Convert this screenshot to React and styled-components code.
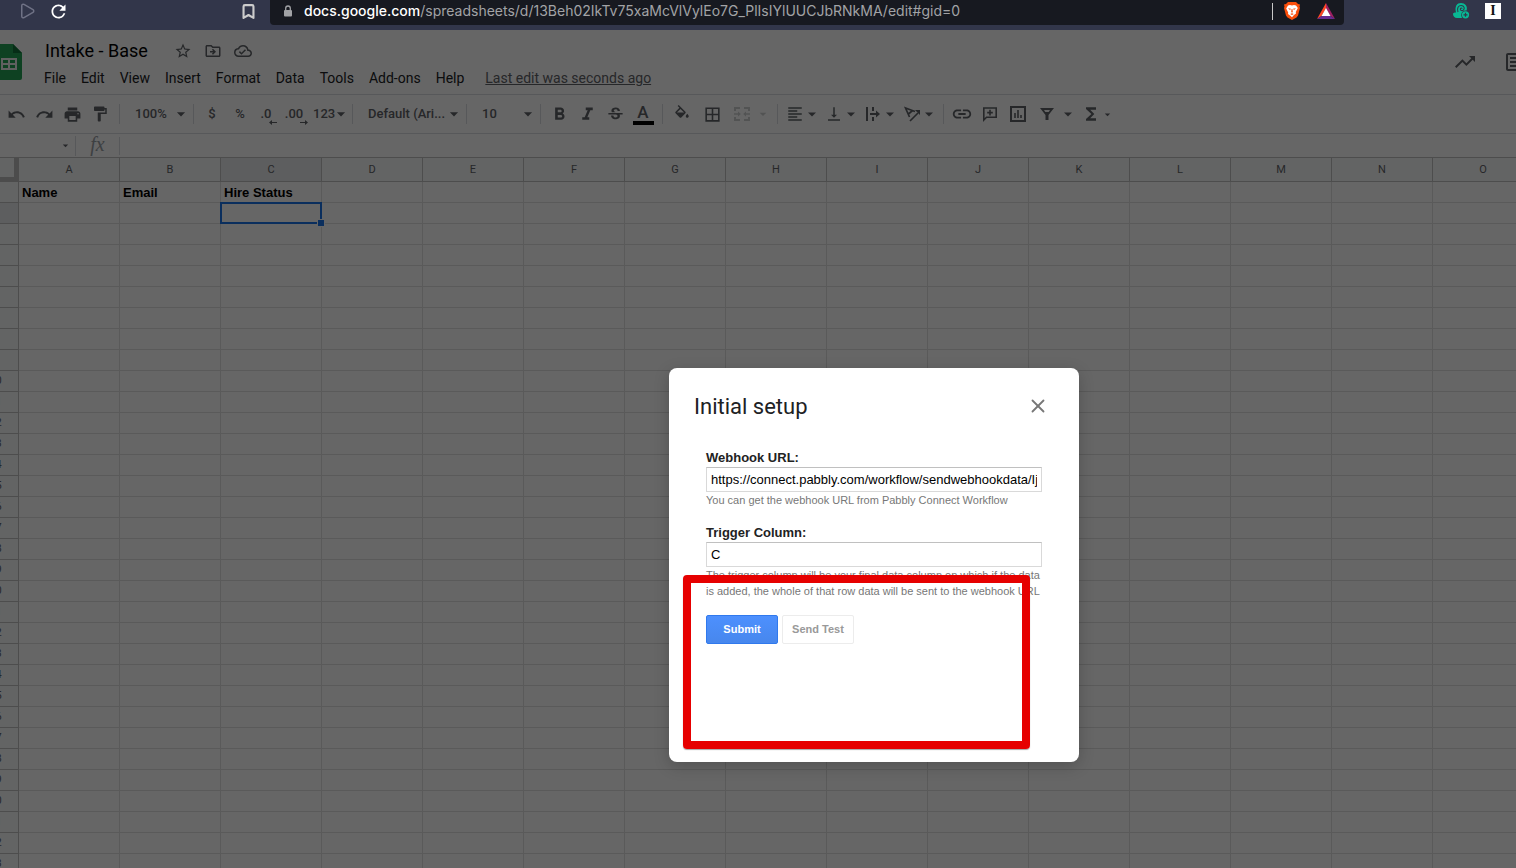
import React from 'react'
import styled, { createGlobalStyle, css } from 'styled-components'
import { Bookmark, Play, X } from 'lucide-react'
import {
  MdArrowDropDown,
  MdBorderAll,
  MdFormatAlignLeft,
  MdFormatBold,
  MdFormatItalic,
  MdFormatPaint,
  MdFunctions,
  MdLink,
  MdOutlineArticle,
  MdOutlineCloudDone,
  MdOutlineDriveFileMove,
  MdPrint,
  MdRedo,
  MdRefresh,
  MdStarBorder,
  MdStrikethroughS,
  MdTrendingUp,
  MdUndo,
  MdVerticalAlignBottom
} from 'react-icons/md'

const colors = {
  chrome: '#32364a',
  address: '#171920',
  icon: '#5f6368',
  line: '#dadce0',
  headLine: '#c0c0c0',
  cellLine: '#e0e0e0',
  head: '#f8f9fa',
  blue: '#1a73e8'
}

const ui = '"Roboto", "Liberation Sans", sans-serif'
const arial = '"Liberation Sans", Arial, sans-serif'

const GlobalStyle = createGlobalStyle`
  * {
    box-sizing: border-box;
  }
  body {
    margin: 0;
    overflow: hidden;
    font-family: ${ui};
  }
  button, input, select {
    font: inherit;
    color: inherit;
    margin: 0;
    padding: 0;
    border: 0;
    background: none;
  }
  svg {
    display: block;
    flex: none;
  }
`

const Page = styled.div`
  display: flex;
  flex-direction: column;
  height: 100vh;
`

/* browser bar */

const BrowserBar = styled.header`
  display: flex;
  flex: none;
  height: 30px;
  background: ${colors.chrome};
  color: #fff;
`

const BrowserNav = styled.nav`
  display: flex;
  flex: none;
  align-items: center;
  width: 270px;
  height: 22px;
  padding: 0 13px 0 18px;
  gap: 12px;
  button:last-child {
    margin-left: auto;
  }
`

const Address = styled.div`
  display: flex;
  flex: 1;
  align-items: center;
  min-width: 0;
  height: 25px;
  padding: 0 9px 3px 13px;
  gap: 11px;
  border-radius: 0 0 4px 4px;
  background: ${colors.address};
  color: #a2a3a6;
  font: 14px/20px "Inter", ${arial};
`

const Url = styled.span`
  flex: 1;
  overflow: hidden;
  white-space: nowrap;
  b {
    color: #fff;
    font-weight: 500;
  }
`

const Shields = styled.div`
  display: flex;
  align-items: center;
  gap: 16px;
  height: 17px;
  padding-left: 10px;
  border-left: 1px solid #c8c8c8;
`

const Extensions = styled.div`
  display: flex;
  flex: none;
  align-items: center;
  justify-content: flex-end;
  width: 172px;
  height: 22px;
  padding-right: 15px;
  gap: 15px;
`

const Instapaper = styled.button`
  width: 16px;
  height: 16px;
  background: #fff;
  color: #111;
  font: bold 14px/16px "Liberation Serif", serif;
`

/* spreadsheet */

const Workspace = styled.div`
  position: relative;
  display: flex;
  flex: 1;
  flex-direction: column;
  min-height: 0;
  overflow: hidden;
  background: #fff;
`

const DocHeader = styled.header`
  display: flex;
  flex: none;
  height: 65px;
  padding-top: 10px;
  border-bottom: 1px solid ${colors.line};
`

const Logo = styled.a`
  flex: none;
  width: 41px;
  margin: 4px 0 0 -4px;
`

const DocInfo = styled.div`
  display: flex;
  flex-direction: column;
`

const TitleRow = styled.div`
  display: flex;
  align-items: center;
  height: 22px;
  padding-left: 8px;
  gap: 12px;
  color: ${colors.icon};
`

const DocTitle = styled.h1`
  margin: 0 14px 0 0;
  color: #000;
  font: 18px/22px ${ui};
`

const MenuRow = styled.nav`
  display: flex;
  align-items: center;
  height: 32px;
  color: #202124;
  font-size: 14px;
  line-height: 20px;
  button {
    padding: 0 7px;
    margin-right: 1px;
  }
  a {
    margin-left: 13px;
    color: ${colors.icon};
  }
`

const DocActions = styled.div`
  display: flex;
  align-items: center;
  height: 44px;
  margin: 0 -11px 0 auto;
  gap: 26px;
  color: ${colors.icon};
`

const Toolbar = styled.div`
  display: flex;
  flex: none;
  align-items: center;
  height: 39px;
  padding-left: 2px;
  border-bottom: 1px solid ${colors.line};
  color: ${colors.icon};
  font-size: 13px;
  font-weight: 500;
  line-height: 16px;
`

const Divider = styled.span`
  flex: none;
  width: 1px;
  height: 20px;
  margin: 0 4px 0 5px;
  background: ${colors.line};
`

const Tool = styled.button`
  display: flex;
  flex: none;
  align-items: center;
  justify-content: center;
  width: ${props => props.$wide ? 30 : 28}px;
  height: 28px;
`

const MenuTool = styled.button`
  display: flex;
  flex: none;
  align-items: center;
  height: 28px;
  padding: 0 1px 0 4px;
  ${props => props.$roomy && css`
    padding-left: 6px;
    gap: 4px;
  `}
  ${props => props.$muted && css`
    opacity: 0.3;
  `}
`

const NumberFormat = styled.button`
  display: flex;
  flex: none;
  align-items: center;
  width: 37px;
  height: 28px;
  padding-left: 3px;
  svg {
    margin-left: -3px;
  }
`

const Decimals = styled.span`
  display: flex;
  flex-direction: column;
  align-items: flex-end;
  height: 18px;
  padding: 1px 4px 0 0;
  font-size: 13px;
  svg {
    margin: -2px -5px 0 0;
  }
`

const TextColor = styled.span`
  width: 21px;
  border-bottom: 4px solid #000;
  font-size: 17px;
  line-height: 18px;
`

const PickerBox = styled.label`
  display: grid;
  flex: none;
  grid-template-columns: 1fr 16px;
  align-items: center;
  width: ${props => props.$width}px;
  select {
    grid-area: 1 / 1 / 2 / 3;
    width: 100%;
    padding: 0 0 0 11px;
    appearance: none;
    outline: none;
  }
  svg {
    grid-area: 1 / 2;
    pointer-events: none;
  }
`

const FormulaBar = styled.div`
  display: flex;
  flex: none;
  align-items: center;
  height: 24px;
  border-bottom: 1px solid ${colors.headLine};
  color: ${colors.icon};
  > input {
    flex: 1;
  }
`

const NameBox = styled.div`
  display: flex;
  flex: none;
  align-items: center;
  width: 76px;
  height: 20px;
  padding-right: 3px;
  border-right: 1px solid ${colors.line};
  input {
    flex: 1;
    min-width: 0;
  }
`

const Fx = styled.span`
  flex: none;
  width: 44px;
  height: 18px;
  border-right: 1px solid ${colors.line};
  color: #9aa0a6;
  font: italic 20px/14px "Liberation Serif", serif;
  text-align: center;
`

const SheetTable = styled.table`
  flex: none;
  width: 1561px;
  margin-left: -27px;
  border-spacing: 0;
  table-layout: fixed;
  th, td {
    height: 21px;
    padding: 2px 3px 0;
    border: solid ${colors.cellLine};
    border-width: 0 1px 1px 0;
  }
  th {
    padding: 0;
    border-color: ${colors.headLine};
    background: ${colors.head};
    color: ${colors.icon};
    font: 11px/14px ${ui};
    text-align: center;
  }
  thead th {
    height: 24px;
  }
  thead th:first-child {
    width: 46px;
    border-color: #bdbdbd;
    border-width: 0 5px 5px 0;
  }
  th[data-active='true'] {
    background: #e8eaed;
  }
`

const Cell = styled.td`
  position: relative;
  color: #000;
  font: bold 13px/16px ${arial};
  ${props => props.$selected && css`
    &::before {
      content: '';
      position: absolute;
      z-index: 1;
      inset: -1px;
      border: 2px solid ${colors.blue};
    }
    &::after {
      content: '';
      position: absolute;
      z-index: 1;
      right: -4px;
      bottom: -4px;
      width: 6px;
      height: 6px;
      border: 1px solid #fff;
      background: ${colors.blue};
    }
  `}
`

/* dialog */

const Overlay = styled.div`
  position: absolute;
  z-index: 2;
  inset: 0;
  display: flex;
  align-items: flex-start;
  justify-content: center;
  padding: 338px 0 0 232px;
  background: rgba(0, 0, 0, 0.6);
`

const DialogBox = styled.section`
  position: relative;
  width: 410px;
  padding: 25px 25px 118px;
  border-radius: 8px;
  background: #fff;
  box-shadow: 0 4px 16px rgba(0, 0, 0, 0.2);
`

const DialogHead = styled.header`
  display: flex;
  align-items: flex-start;
  justify-content: space-between;
  margin-bottom: 28px;
  padding-right: 5px;
  color: #777;
  h2 {
    margin: 0;
    color: #202124;
    font: 22px/28px ${ui};
  }
  button {
    padding-top: 2px;
  }
`

const Form = styled.form`
  display: flex;
  flex-direction: column;
  padding: 0 12px;
  gap: 16px;
  color: #222;
  font: 13px/18px ${arial};
`

const FieldBox = styled.div`
  display: flex;
  flex-direction: column;
  label {
    font-weight: bold;
  }
  input {
    height: 25px;
    padding: 0 4px;
    border: 1px solid #d9d9d9;
    border-top-color: #c0c0c0;
    color: #000;
  }
  small {
    color: #777;
    font-size: 11px;
    line-height: 16px;
    white-space: nowrap;
  }
`

const Buttons = styled.div`
  display: flex;
  gap: 4px;
`

const FormButton = styled.button`
  width: 72px;
  height: 29px;
  padding-bottom: 1px;
  border: 1px solid #ececec;
  border-radius: 2px;
  background: #fff;
  color: #999;
  font-size: 11px;
  font-weight: bold;
  ${props => props.$primary && css`
    border-color: #3079ed;
    background: linear-gradient(#4d90fe, #4787ed);
    color: #fff;
  `}
`

const Highlight = styled.div`
  position: absolute;
  top: 207px;
  left: 14px;
  width: 347px;
  height: 174px;
  border: 8px solid #e60000;
  border-radius: 4px;
  box-shadow: 0 1px 1px rgba(0, 0, 0, 0.35);
  pointer-events: none;
`

/* drawings */

const LockIcon = () => (
  <svg width='10' height='12' viewBox='0 0 10 12'>
    <rect x='1' y='5' width='8' height='6.500' rx='1' fill='currentColor' />
    <path d='M2.700 6V3.300a2.300 2.300 0 0 1 4.600 0V6' fill='none' stroke='currentColor' strokeWidth='1.300' />
  </svg>
)

const SheetsLogo = () => (
  <svg width='26' height='36' viewBox='0 0 26 36'>
    <path d='M2 0h15l9 9v25a2 2 0 0 1-2 2H2a2 2 0 0 1-2-2V2a2 2 0 0 1 2-2z' fill='#23a455' />
    <path d='M17 0l9 9h-9z' fill='#12703a' />
    <path d='M5 14h16v12H5zM7 16v3h5v-3zm7 0v3h5v-3zm-7 5v3h5v-3zm7 0v3h5v-3z' fill='#f1f1f1' fillRule='evenodd' />
  </svg>
)

const BraveLogo = () => (
  <svg width='18' height='18' viewBox='0 0 18 18'>
    <path d='M5 0h8l2 2 2 .5-.5 2 .5 1.500-2 7.500-1.500 2L9 18l-4.500-2.500L3 13.500 1 6l.5-1.500-.5-2L3 2z' fill='#fb4f0b' />
    <path d='M5 3.500 7 3l2 .5 2-.5 2 .5 1.800 2.500-2 4 .200 1.500-2 1.500L9 15.200 7 13.500 5 12l.2-1.500-2-4z' fill='#fff' />
    <path d='M5 6.200l3 .6-1 1.200zM13 6.200l-3 .6 1 1.200zM8.600 7h.8l.4 3-.8.800-.8-.8zM7.200 12l1.800-.7 1.800.7L9 13z' fill='#fb4f0b' />
  </svg>
)

const BatLogo = () => (
  <svg width='18' height='16' viewBox='0 0 18 16'>
    <path d='M9 0v5.500L4.500 13 0 16z' fill='#ff4724' />
    <path d='M9 0l9 16-4.500-3L9 5.500z' fill='#9e1f63' />
    <path d='M0 16l4.500-3h9l4.500 3z' fill='#662d91' />
    <path d='M9 5l4.500 8h-9z' fill='#fff' />
  </svg>
)

const SnailIcon = () => (
  <svg width='17' height='16' viewBox='0 0 17 16'>
    <path d='M0 11c0-1 1-1.500 3-1.500C1.500 3 4 0 8 0c4 0 6.500 3 5.800 6.500L13 9c-4 0-5 3-4 6H4c-2.500 0-4-2-4-4z' fill='#08b894' />
    <path d='M5 9C3.500 5 5.500 2.500 8.200 2.500c3 0 4 3.500 2 4.800C8.500 8.300 6.800 7 7.500 5.500c.4-.7 1.500-.5 1.500.3' fill='none' stroke={colors.chrome} strokeWidth='1.100' />
    <circle cx='12.500' cy='11.800' r='4.200' fill={colors.chrome} />
    <circle cx='12.500' cy='11.800' r='3.600' fill='#08b894' />
    <path d='M12.500 9.800v4M10.500 11.800h4' stroke={colors.chrome} strokeWidth='1.200' />
  </svg>
)

const FillIcon = () => (
  <svg width='18' height='18' viewBox='0 0 24 24' fill='currentColor'>
    <path d='M16.560 8.940 7.620 0 6.210 1.410l2.380 2.380-5.150 5.150a1.490 1.490 0 0 0 0 2.120l5.500 5.500c.29.29.68.44 1.060.44s.77-.15 1.060-.44l5.500-5.500c.59-.58.59-1.530 0-2.120zM5.210 10 10 5.210 14.790 10zM19 11.500s-2 2.170-2 3.500c0 1.100.9 2 2 2s2-.9 2-2c0-1.330-2-3.500-2-3.500z' />
  </svg>
)

const MergeIcon = () => (
  <svg width='18' height='18' viewBox='0 0 18 18' fill='none' stroke='currentColor' strokeWidth='2'>
    <path d='M2 6V3h5M11 3h5v3M2 12v3h5M11 15h5v-3' />
    <path d='M1 9h5M12 9h5' strokeWidth='1.500' />
    <path d='M5 6.500 7.800 9 5 11.500zM13 6.500 10.200 9l2.800 2.500z' fill='currentColor' stroke='none' />
  </svg>
)

const WrapIcon = () => (
  <svg width='18' height='18' viewBox='0 0 18 18' fill='none' stroke='currentColor' strokeWidth='2'>
    <path d='M3 2v14M9 2v4M9 12v4M6 9h7' />
    <path d='M12 5.500 16 9l-4 3.500z' fill='currentColor' stroke='none' />
  </svg>
)

const RotateIcon = () => (
  <svg width='18' height='18' viewBox='0 0 18 18' fill='none' stroke='currentColor' strokeWidth='1.700'>
    <path d='M6.500 12 2.500 3l9.500 3.500M5.500 9l4-3.500M7 16l8-8' />
    <path d='M12 5h5v5z' fill='currentColor' stroke='none' />
  </svg>
)

const CommentIcon = () => (
  <svg width='16' height='16' viewBox='0 0 16 16' fill='none' stroke='currentColor' strokeWidth='1.600'>
    <path d='M1.800 14V2h12.400v9.200H4.500z' />
    <path d='M8 3.800v5.600M5.200 6.600h5.600' />
  </svg>
)

const ChartIcon = () => (
  <svg width='16' height='16' viewBox='0 0 16 16' fill='none' stroke='currentColor' strokeWidth='2'>
    <rect x='1' y='1' width='14' height='14' />
    <path d='M5 7v5M8 4v8M11 9v3' strokeWidth='1.600' />
  </svg>
)

const FilterIcon = () => (
  <svg width='18' height='18' viewBox='0 0 18 18' fill='currentColor'>
    <path d='M2 3h14l-5.500 7v5h-3v-5zM6 5l1.300 2h3.400L12 5z' fillRule='evenodd' />
  </svg>
)

const SmallArrow = ({ right }) => (
  <svg width='8' height='5' viewBox='0 0 8 5' fill='currentColor'>
    <path d={right ? 'M0 2h5V0l3 2.500L5 5V3H0z' : 'M8 2H3V0L0 2.500 3 5V3h5z'} />
  </svg>
)

const Arrow = () => <MdArrowDropDown size={18} viewBox='1 1 22 22' />

const Picker = ({ name, value, width }) => (
  <PickerBox $width={width}>
    <select aria-label={name} defaultValue={value}>
      <option>{value}</option>
    </select>
    <Arrow />
  </PickerBox>
)

const menus = ['File', 'Edit', 'View', 'Insert', 'Format', 'Data', 'Tools', 'Add-ons', 'Help']
const columns = 'ABCDEFGHIJKLMNO'.split('')
const rows = Array.from({ length: 33 }, (_, i) => i + 1)
const cells = { A1: 'Name', B1: 'Email', C1: 'Hire Status' }
const selected = 'C2'

const Browser = () => (
  <BrowserBar>
    <BrowserNav>
      <button aria-label='Forward'><Play size={18} strokeWidth={2} color='#6f7285' /></button>
      <button aria-label='Reload'><MdRefresh size={21} /></button>
      <button aria-label='Bookmark'><Bookmark size={17} strokeWidth={3} color='#ccc' /></button>
    </BrowserNav>
    <Address>
      <LockIcon />
      <Url><b>docs.google.com</b>/spreadsheets/d/13Beh02IkTv75xaMcVlVylEo7G_PlIsIYlUUCJbRNkMA/edit#gid=0</Url>
      <Shields>
        <BraveLogo />
        <BatLogo />
      </Shields>
    </Address>
    <Extensions>
      <SnailIcon />
      <Instapaper>I</Instapaper>
    </Extensions>
  </BrowserBar>
)

const Header = () => (
  <DocHeader>
    <Logo href='#' aria-label='Sheets home'><SheetsLogo /></Logo>
    <DocInfo>
      <TitleRow>
        <DocTitle>Intake - Base</DocTitle>
        <MdStarBorder size={18} />
        <MdOutlineDriveFileMove size={18} />
        <MdOutlineCloudDone size={18} />
      </TitleRow>
      <MenuRow>
        {menus.map(menu => <button key={menu}>{menu}</button>)}
        <a href='#'>Last edit was seconds ago</a>
      </MenuRow>
    </DocInfo>
    <DocActions>
      <MdTrendingUp size={24} />
      <MdOutlineArticle size={24} />
    </DocActions>
  </DocHeader>
)

const Tools = () => (
  <Toolbar>
    <Tool aria-label='Undo'><MdUndo size={19} /></Tool>
    <Tool aria-label='Redo'><MdRedo size={19} /></Tool>
    <Tool aria-label='Print'><MdPrint size={19} /></Tool>
    <Tool aria-label='Paint format'><MdFormatPaint size={18} /></Tool>
    <Divider />
    <Picker name='Zoom' value='100%' width={64} />
    <Divider />
    <Tool>$</Tool>
    <Tool>%</Tool>
    <Tool><Decimals>.0<SmallArrow /></Decimals></Tool>
    <Tool><Decimals>.00<SmallArrow right /></Decimals></Tool>
    <NumberFormat>123<Arrow /></NumberFormat>
    <Divider />
    <Picker name='Font' value='Default (Ari...' width={104} />
    <Divider />
    <Picker name='Font size' value='10' width={64} />
    <Divider />
    <Tool aria-label='Bold'><MdFormatBold size={21} /></Tool>
    <Tool aria-label='Italic'><MdFormatItalic size={21} /></Tool>
    <Tool aria-label='Strikethrough'><MdStrikethroughS size={19} /></Tool>
    <Tool><TextColor>A</TextColor></Tool>
    <Divider />
    <Tool $wide aria-label='Fill color'><FillIcon /></Tool>
    <Tool $wide aria-label='Borders'><MdBorderAll size={19} /></Tool>
    <MenuTool $roomy $muted aria-label='Merge cells'><MergeIcon /><MdArrowDropDown size={16} /></MenuTool>
    <Divider />
    <MenuTool aria-label='Horizontal align'><MdFormatAlignLeft size={18} /><MdArrowDropDown size={16} viewBox='2 2 20 20' /></MenuTool>
    <MenuTool aria-label='Vertical align'><MdVerticalAlignBottom size={18} /><MdArrowDropDown size={16} viewBox='2 2 20 20' /></MenuTool>
    <MenuTool aria-label='Text wrapping'><WrapIcon /><MdArrowDropDown size={16} viewBox='2 2 20 20' /></MenuTool>
    <MenuTool aria-label='Text rotation'><RotateIcon /><MdArrowDropDown size={16} viewBox='2 2 20 20' /></MenuTool>
    <Divider />
    <Tool aria-label='Insert link'><MdLink size={22} /></Tool>
    <Tool aria-label='Insert comment'><CommentIcon /></Tool>
    <Tool aria-label='Insert chart'><ChartIcon /></Tool>
    <MenuTool $roomy aria-label='Filter'><FilterIcon /><MdArrowDropDown size={16} viewBox='2 2 20 20' /></MenuTool>
    <MenuTool aria-label='Functions'><MdFunctions size={20} /><MdArrowDropDown size={13} /></MenuTool>
  </Toolbar>
)

const Sheet = () => (
  <SheetTable>
    <thead>
      <tr>
        <th />
        {columns.map(col => <th key={col} data-active={selected[0] === col}>{col}</th>)}
      </tr>
    </thead>
    <tbody>
      {rows.map(row => (
        <tr key={row}>
          <th data-active={selected.slice(1) === String(row)}>{row}</th>
          {columns.map(col => (
            <Cell key={col} $selected={selected === col + row}>{cells[col + row]}</Cell>
          ))}
        </tr>
      ))}
    </tbody>
  </SheetTable>
)

const SetupDialog = () => (
  <DialogBox role='dialog' aria-labelledby='setup-title'>
    <DialogHead>
      <h2 id='setup-title'>Initial setup</h2>
      <button aria-label='Close'><X size={22} strokeWidth={2} /></button>
    </DialogHead>
    <Form onSubmit={e => e.preventDefault()}>
      <FieldBox>
        <label htmlFor='webhook'>Webhook URL:</label>
        <input id='webhook' defaultValue='https://connect.pabbly.com/workflow/sendwebhookdata/Ij' />
        <small>You can get the webhook URL from Pabbly Connect Workflow</small>
      </FieldBox>
      <FieldBox>
        <label htmlFor='trigger'>Trigger Column:</label>
        <input id='trigger' defaultValue='C' />
        <small>
          The trigger column will be your final data column on which if the data<br />
          is added, the whole of that row data will be sent to the webhook URL
        </small>
      </FieldBox>
      <Buttons>
        <FormButton $primary>Submit</FormButton>
        <FormButton type='button'>Send Test</FormButton>
      </Buttons>
    </Form>
    <Highlight />
  </DialogBox>
)

const App = () => (
  <Page>
    <GlobalStyle />
    <Browser />
    <Workspace>
      <Header />
      <Tools />
      <FormulaBar>
        <NameBox>
          <input aria-label='Name box' />
          <MdArrowDropDown size={13} />
        </NameBox>
        <Fx>fx</Fx>
        <input aria-label='Formula' />
      </FormulaBar>
      <Sheet />
      <Overlay>
        <SetupDialog />
      </Overlay>
    </Workspace>
  </Page>
)

export default App
